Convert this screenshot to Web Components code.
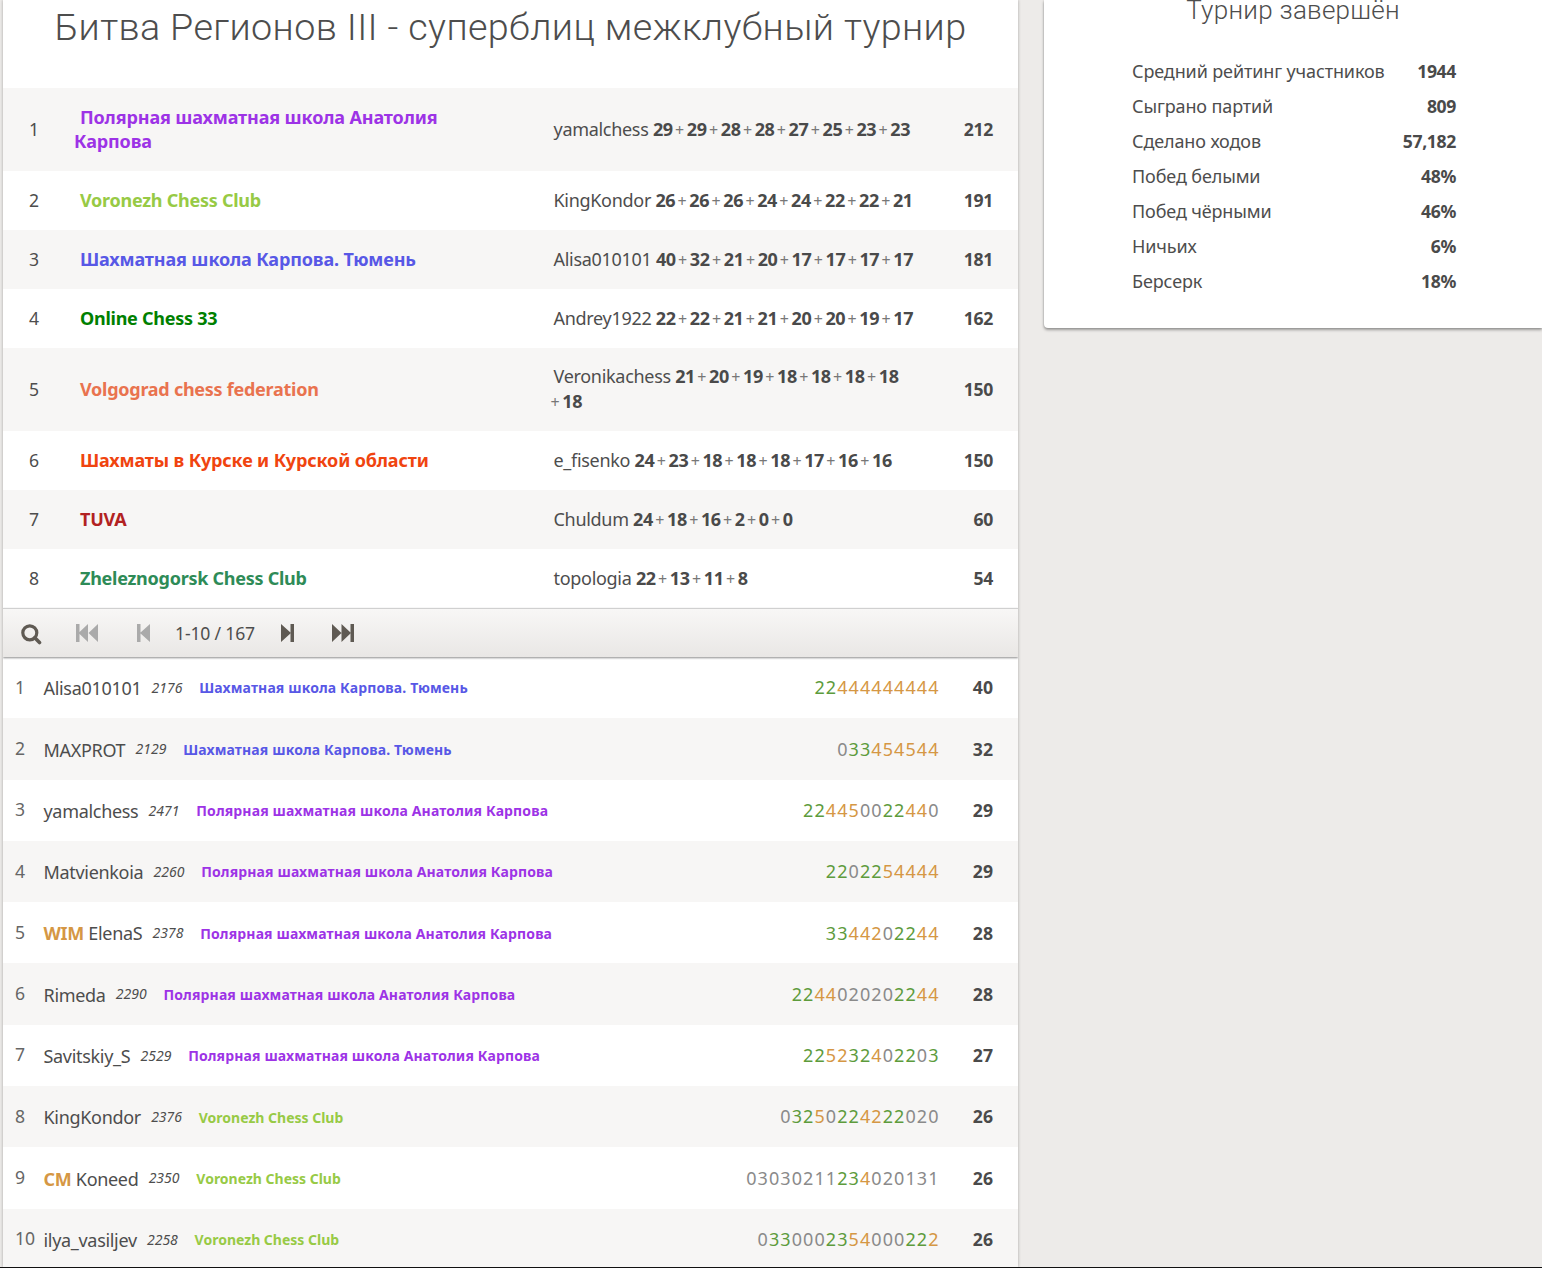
<!DOCTYPE html>
<html lang="ru"><head><meta charset="utf-8">
<style>
html,body{margin:0;padding:0;height:1268px;overflow:hidden;background:#edebe9;font-family:"Noto Sans",sans-serif;color:#4d4d4d}
</style></head><body>
<tour-app></tour-app>
<script>
const TEAMS={p:['Полярная шахматная школа Анатолия Карпова','#9d33e6'],v:['Voronezh Chess Club','#97ca45'],k:['Шахматная школа Карпова. Тюмень','#5858e6']};
const isCyr=t=>/[А-яё]/.test(t);
class TeamRow extends HTMLElement{
  connectedCallback(){
    const s=this.attachShadow({mode:'open'});
    const scores=this.getAttribute('scores').split(',');
    const pts=scores.map((x,i)=>(i?'<wbr><i>+</i>':'')+'<b>'+x+'</b>').join('');
    s.innerHTML=`<style>
    :host{display:grid;grid-template-columns:71px 480px 391px 1fr;align-items:center;height:${this.getAttribute('h')||59}px;font-size:18px;letter-spacing:-.3px;background:${this.hasAttribute('alt')?'#f7f6f5':'#fff'}}
    .r{padding-left:26px;color:#4d4d4d;font-size:17.6px;letter-spacing:0;position:relative;top:-1px}
    .n{font-weight:700;font-size:18px;line-height:24px;letter-spacing:${isCyr(this.textContent)?'-.14px':'-.26px'};color:${this.getAttribute('color')};padding-right:60px;text-indent:6px;position:relative;top:-1px}
    .p{line-height:23.6px;padding-top:.8px;padding-right:25px;margin-left:-.5px}
    b{font-weight:700;color:#4a4a4a;margin-right:5.3px;letter-spacing:-.36px}
    i{font-style:normal;color:#777;font-size:16px;margin:0 2.9px 0 -3px;font-weight:400}
    .t{font-weight:700;text-align:right;padding-right:25px;font-size:17.6px;color:#4a4a4a;position:relative;top:-1px}
    </style><div class="r">${this.getAttribute('rank')}</div><div class="n"><slot></slot></div><div class="p">${this.getAttribute('player')} ${pts}</div><div class="t">${this.getAttribute('total')}</div>`;
  }
}
customElements.define('team-row',TeamRow);
class PlayerRow extends HTMLElement{
  connectedCallback(){
    const s=this.attachShadow({mode:'open'});
    const [team,col]=TEAMS[this.getAttribute('team')];
    const title=this.getAttribute('title-tag');
    const g=this.getAttribute('sheet-colors');
    const chars=[...this.getAttribute('sheet')];
    const html=chars.map((c,i)=>`<span style="color:${{g:'#5d9b3c',o:'#d59744',n:'#8a8a8a'}[g[i]]}">${c}</span>`).join('');
    s.innerHTML=`<style>
    :host{display:flex;align-items:center;height:61.3px;background:${this.hasAttribute('alt')?'#f7f6f5':'#fff'};padding-right:25px;box-sizing:border-box}
    .r{width:40.5px;padding-left:12px;box-sizing:border-box;font-size:17.6px;color:#666;position:relative;top:-1px}
    .n{font-size:18px;letter-spacing:-.31px;white-space:nowrap;position:relative;top:.6px}
    .tt{color:#d59744;font-weight:700}
    .e{font-style:italic;font-size:14px;margin-left:10.2px;position:relative;top:-.2px}
    .c{font-size:14px;font-weight:700;margin-left:16.8px;color:${col};white-space:nowrap;letter-spacing:${isCyr(team)?'.13px':'0'};position:relative;top:.3px}
    .s{margin-left:auto;margin-right:-.5px;font-size:18px;letter-spacing:1.07px;white-space:nowrap;position:relative;top:-.3px}
    .t{width:54px;text-align:right;font-weight:700;font-size:17.6px;color:#4a4a4a;position:relative;top:-.3px}
    </style><div class="r">${this.getAttribute('rank')}</div><div class="n">${title?`<span class="tt">${title}</span> `:''}<slot></slot></div><div class="e">${this.getAttribute('rating')}</div><div class="c">${team}</div><div class="s">${html}</div><div class="t">${this.getAttribute('total')}</div>`;
  }
}
customElements.define('player-row',PlayerRow);
class PagerBar extends HTMLElement{
  connectedCallback(){
    const s=this.attachShadow({mode:'open'});
    s.innerHTML=`<style>
    :host{display:flex;align-items:center;height:49px;box-sizing:border-box;background:linear-gradient(#f8f7f6,#e9e7e5);border-top:1px solid #d0d0d0;box-shadow:0 1px 2px rgba(0,0,0,.45);position:relative;z-index:1;color:#4d4d4d;font-size:17.6px}
    svg{display:block;position:absolute;top:15px;fill:#5f5a53}
    .d{fill:#aaa}
    span{position:absolute;left:172px;top:12px;letter-spacing:-.01em}
    </style>
    <svg style="left:18px;top:15px" width="21" height="21" viewBox="0 0 21 21"><circle cx="8.800" cy="8.800" r="7" fill="none" stroke="#5f5a53" stroke-width="3.200"/><path d="M13.800 13.800L18.500 18.500" stroke="#5f5a53" stroke-width="3.600" stroke-linecap="round"/></svg>
    <svg class="d" style="left:72px" width="24" height="18" viewBox="0 0 24 18"><path d="M1 0h3.500v18H1zM13 0v18L3.500 9zM23 0v18L13.500 9z"/></svg>
    <svg class="d" style="left:133px" width="14" height="18" viewBox="0 0 14 18"><path d="M1 0h3.500v18H1zM14 0v18L4 9z"/></svg>
    <span>1-10 / 167</span>
    <svg style="left:276.500px" width="14" height="18" viewBox="0 0 14 18"><path d="M10.500 0H14v18h-3.500zM1 0v18l10-9z"/></svg>
    <svg style="left:328px" width="24" height="18" viewBox="0 0 24 18"><path d="M19.500 0H23v18h-3.500zM10.500 0v18l9.500-9zM1 0v18l9.500-9z"/></svg>`;
  }
}
customElements.define('pager-bar',PagerBar);
class StatsCard extends HTMLElement{
  connectedCallback(){
    const s=this.attachShadow({mode:'open'});
    const rows=[['Средний рейтинг участников','1944'],['Сыграно партий','809'],['Сделано ходов','57,182'],['Побед белыми','48%'],['Побед чёрными','46%'],['Ничьих','6%'],['Берсерк','18%']];
    s.innerHTML=`<style>
    :host{display:block;background:#fff;height:328px;box-sizing:border-box;border-radius:0 0 0 4px;box-shadow:0 2px 3px rgba(0,0,0,.35),0 0 2px rgba(0,0,0,.2);overflow:hidden}
    h2{margin:-11px 0 0;height:54px;font:300 26px/42px Roboto,sans-serif;text-align:center;color:#4d4d4d;letter-spacing:.01em}
    .l{margin:11px 86px 0 88px}
    .row{display:flex;justify-content:space-between;height:35px;line-height:35px;font-size:18px;letter-spacing:-.12px;color:#4d4d4d}
    b{font-weight:700;font-size:17.6px;letter-spacing:-.36px;color:#4a4a4a}
    </style><h2>Турнир завершён</h2><div class="l">${rows.map(r=>`<div class="row"><span>${r[0]}</span><b>${r[1]}</b></div>`).join('')}</div>`;
  }
}
customElements.define('stats-card',StatsCard);
class TourApp extends HTMLElement{
  connectedCallback(){
    const s=this.attachShadow({mode:'open'});
    s.innerHTML=`<style>
    :host{display:grid;grid-template-columns:1015px 498px;column-gap:26px;padding-left:3px;height:1268px;box-sizing:border-box;overflow:hidden;border-bottom:1px solid #111}
    main{background:#fff;box-shadow:0 0 3px rgba(0,0,0,.3);height:1267px;overflow:hidden}
    h1{margin:0;height:88px;font:300 37.7px/54px Roboto,sans-serif;color:#4d4d4d;text-align:center;letter-spacing:.01em}
    </style>
    <main><h1>Битва Регионов III - суперблиц межклубный турнир</h1>
    <slot></slot></main>
    <aside><stats-card></stats-card></aside>`;
    const T=[['1','Полярная шахматная школа Анатолия Карпова','#9d33e6','yamalchess','29,29,28,28,27,25,23,23','212',83,1],
    ['2','Voronezh Chess Club','#97ca45','KingKondor','26,26,26,24,24,22,22,21','191',59,0],
    ['3','Шахматная школа Карпова. Тюмень','#5858e6','Alisa010101','40,32,21,20,17,17,17,17','181',59,1],
    ['4','Online Chess 33','#008000','Andrey1922','22,22,21,21,20,20,19,17','162',59,0],
    ['5','Volgograd chess federation','#e9734f','Veronikachess','21,20,19,18,18,18,18,18','150',83,1],
    ['6','Шахматы в Курске и Курской области','#f0440f','e_fisenko','24,23,18,18,18,17,16,16','150',59,0],
    ['7','TUVA','#b22222','Chuldum','24,18,16,2,0,0','60',59,1],
    ['8','Zheleznogorsk Chess Club','#2e8b57','topologia','22,13,11,8','54',59,0]];
    const P=[['1','Alisa010101','','2176','k','22444444444','ggooooooooo','40'],
    ['2','MAXPROT','','2129','k','033454544','nggoooooo','32'],
    ['3','yamalchess','','2471','p','224450022440','ggooonnggoon','29'],
    ['4','Matvienkoia','','2260','p','2202254444','ggnggooooo','29'],
    ['5','ElenaS','WIM','2378','p','3344202244','ggooonggoo','28'],
    ['6','Rimeda','','2290','p','2244020202244','ggoonnnnnggoo','28'],
    ['7','Savitskiy_S','','2529','p','225232402203','ggooggonggng','27'],
    ['8','KingKondor','','2376','v','03250224222020','nggonggooggnnn','26'],
    ['9','Koneed','CM','2350','v','03030211234020131','nnnnnnnnggonnnnnn','26'],
    ['10','ilya_vasiljev','','2258','v','0330002354000222','nggnnnggoonnnggo','26']];
    let h='';
    T.forEach(t=>{h+=`<team-row rank="${t[0]}" color="${t[2]}" player="${t[3]}" scores="${t[4]}" total="${t[5]}" h="${t[6]}" ${t[7]?'alt':''}>${t[1]}</team-row>`});
    h+='<pager-bar></pager-bar>';
    P.forEach((p,i)=>{h+=`<player-row rank="${p[0]}" title-tag="${p[2]}" rating="${p[3]}" team="${p[4]}" sheet="${p[5]}" sheet-colors="${p[6]}" total="${p[7]}" ${i%2?'alt':''}>${p[1]}</player-row>`});
    this.innerHTML=h;
  }
}
customElements.define('tour-app',TourApp);
</script>
</body></html>
